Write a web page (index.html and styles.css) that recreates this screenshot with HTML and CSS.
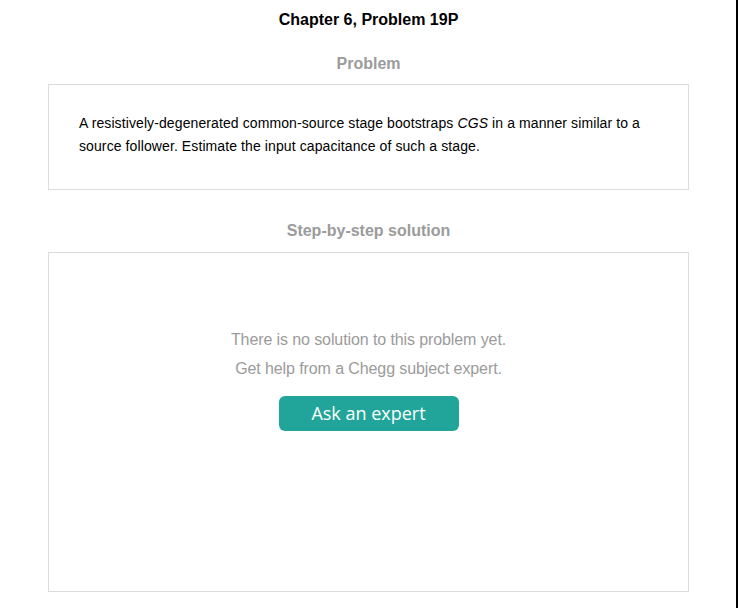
FILE: index.html
```html
<!DOCTYPE html>
<html>
<head>
<meta charset="utf-8">
<link rel="stylesheet" href="styles.css">
</head>
<body>
<div class="page">
  <div class="content">
    <h1 class="title">Chapter 6, Problem 19P</h1>
    <h2 class="section-title first">Problem</h2>
    <div class="card problem">
      <p class="problem-text">A resistively-degenerated common-source stage bootstraps <i>CGS</i> in a manner similar to a source follower. Estimate the input capacitance of such a stage.</p>
    </div>
    <h2 class="section-title second">Step-by-step solution</h2>
    <div class="card solution">
      <p class="empty-line">There is no solution to this problem yet.</p>
      <p class="empty-line">Get help from a Chegg subject expert.</p>
      <button class="ask-btn">Ask an expert</button>
    </div>
  </div>
</div>
</body>
</html>
```

FILE: styles.css
```css
html, body {
  margin: 0;
  padding: 0;
  background: #ffffff;
}
body {
  font-family: "Liberation Sans", Arial, sans-serif;
  overflow: hidden;
}
.page {
  width: 736px;
  height: 608px;
  border-right: 2px solid #000;
  box-sizing: content-box;
}
.content {
  width: 641px;
  margin: 0 auto;
  display: flex;
  flex-direction: column;
  align-items: stretch;
  padding-left: 1px;
}
.title {
  margin: 10px 0 0;
  font-size: 16px;
  line-height: 20px;
  font-weight: bold;
  text-align: center;
  color: #000;
}
.section-title {
  margin: 0;
  font-size: 16px;
  line-height: 20px;
  font-weight: bold;
  text-align: center;
  color: #9b9b9b;
}
.section-title.first {
  margin-top: 24px;
  margin-bottom: 10px;
}
.section-title.second {
  margin-top: 31px;
  margin-bottom: 11px;
}
.card {
  border: 1px solid #dcdcdc;
  box-sizing: border-box;
}
.problem {
  height: 106px;
  padding: 27px 30px 0;
}
.problem-text {
  margin: 0;
  font-size: 14px;
  line-height: 23px;
  letter-spacing: 0.1px;
  color: #000;
}
.solution {
  height: 340px;
  display: flex;
  flex-direction: column;
  align-items: center;
  padding-top: 72px;
}
.empty-line {
  margin: 0;
  font-size: 16px;
  line-height: 29px;
  letter-spacing: -0.1px;
  color: #9b9b9b;
}
.ask-btn {
  margin-top: 13px;
  width: 180px;
  height: 35px;
  border: none;
  border-radius: 6px;
  background: #21a59b;
  color: #fff;
  font-family: "Open Sans", "DejaVu Sans", sans-serif;
  font-size: 18px;
  line-height: 35px;
  padding: 0;
}
```
